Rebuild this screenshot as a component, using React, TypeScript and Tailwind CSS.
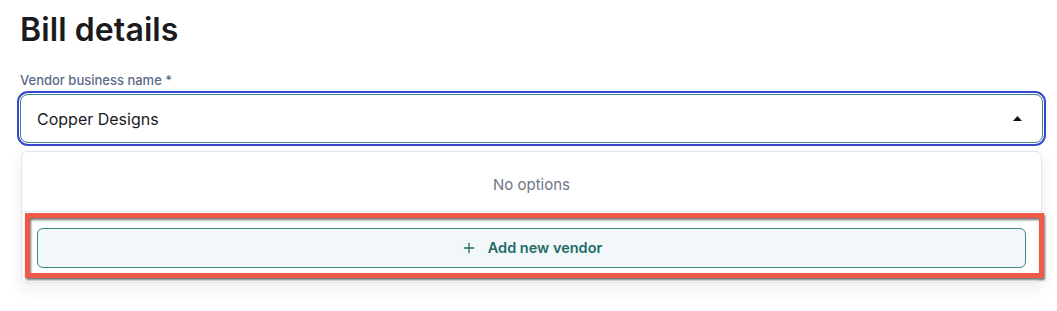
import { Plus } from 'lucide-react';

export default function App() {
  return (
    <div className="w-[1057px] h-[311px] bg-white pl-5 pr-[14px] font-['Inter',sans-serif] overflow-hidden">
      {/* Title */}
      <h1 className="pt-[11px] text-[32px] leading-[38px] font-semibold text-[#1b1b1d] tracking-[0.1px]">
        Bill details
      </h1>

      {/* Vendor field */}
      <label className="block mt-[23px] text-[13px] leading-4 font-medium text-[#5b6a8a]">
        Vendor business name *
      </label>
      <div className="mt-[6px] h-[49px] flex items-center justify-between pl-4 pr-5 border border-[#3d8580] rounded-[8px] outline-2 outline-offset-1 outline-[#3a46cf]">
        <span className="text-[16px] text-[#1b1b1d]">Copper Designs</span>
        <svg width="9" height="5" viewBox="0 0 9 5" className="mt-[-1px]">
          <path d="M0 5 L4.5 0 L9 5 Z" fill="#111" />
        </svg>
      </div>

      {/* Dropdown panel */}
      <div className="mt-2 mx-px bg-white border border-[#e4e6ee] rounded-md shadow-[0_6px_16px_rgba(20,30,60,0.08)]">
        <div className="pt-[23px] pb-[16px] text-center text-[15px] leading-5 text-[#6f7789] border-b border-[#e3e5ea]">
          No options
        </div>
        <div className="relative pt-4 pb-[14px] px-[15px]">
          <button className="w-full h-10 flex items-center justify-center gap-[11px] rounded-md border border-[#3f8a85] bg-[#f2f7fa] text-[14.5px] font-semibold text-[#1f6a66]">
            <Plus size={16} strokeWidth={2} />
            Add new vendor
          </button>
          {/* Highlight annotation */}
          <div className="absolute left-[3px] top-px w-[1019px] h-[65px] border-[5px] border-[#ef5a47] [filter:drop-shadow(1px_2px_1px_rgba(0,0,0,0.55))] pointer-events-none" />
        </div>
      </div>
    </div>
  );
}
